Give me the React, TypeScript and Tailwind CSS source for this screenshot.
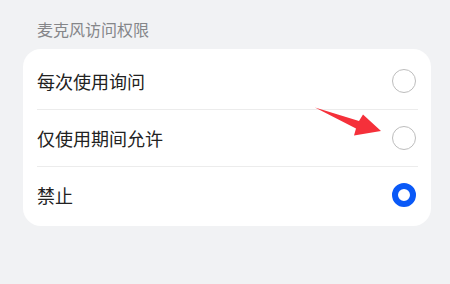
import React from "react";

const rows = [
  { label: "每次使用询问", selected: false },
  { label: "仅使用期间允许", selected: false },
  { label: "禁止", selected: true },
];

export default function App() {
  return (
    <div
      className="relative w-[450px] h-[284px] bg-[#f1f2f4] overflow-hidden"
      style={{ fontFamily: '"Noto Sans CJK SC", "Noto Sans", sans-serif' }}
    >
      <div className="h-[49px] pl-[37px] pt-[17px] text-[16px] leading-[24px] text-[#858689]">
        麦克风访问权限
      </div>
      <div className="ml-[23px] w-[408px] rounded-[18px] bg-white pt-[4px] pb-[3px]">
        {rows.map((r, i) => (
          <div key={r.label}>
            {i > 0 && <div className="ml-[14px] mr-[13px] h-px bg-[#ececec]" />}
            <div className="flex h-[56px] items-center justify-between pl-[14px] pr-[15px]">
              <span className="text-[18px] leading-[24px] text-[#222222]">{r.label}</span>
              {r.selected ? (
                <div className="h-[24px] w-[24px] rounded-full border-[6.5px] border-[#0a59f7]" />
              ) : (
                <div className="h-[24px] w-[24px] rounded-full border-[1.5px] border-[#bdbdbd]" />
              )}
            </div>
          </div>
        ))}
      </div>
      <svg className="absolute left-0 top-0" width="450" height="284" viewBox="0 0 450 284">
        <polygon
          points="315,107.5 359,121 363,114.5 381,131 354,135.5 356,128.5"
          fill="#f5303a"
        />
      </svg>
    </div>
  );
}
